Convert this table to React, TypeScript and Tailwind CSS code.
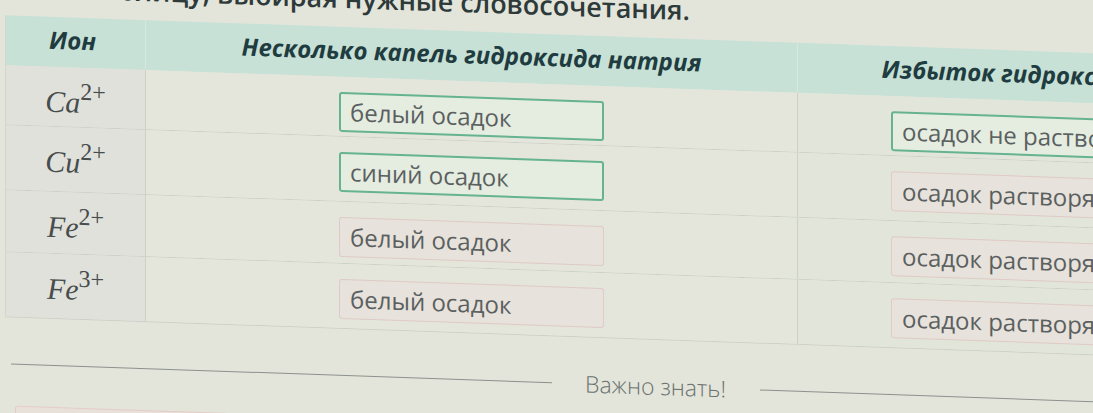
import React from 'react';

type Row = {
  el: string;
  charge: string;
  few: string;
  fewOk: boolean;
  excess: string;
  excessOk: boolean;
  h: string;
};

const rows: Row[] = [
  { el: 'Ca', charge: '2+', few: 'белый осадок', fewOk: true, excess: 'осадок не растворяется', excessOk: true, h: 'h-[60px]' },
  { el: 'Cu', charge: '2+', few: 'синий осадок', fewOk: true, excess: 'осадок растворяется', excessOk: false, h: 'h-[65px]' },
  { el: 'Fe', charge: '2+', few: 'белый осадок', fewOk: false, excess: 'осадок растворяется', excessOk: false, h: 'h-[62px]' },
  { el: 'Fe', charge: '3+', few: 'белый осадок', fewOk: false, excess: 'осадок растворяется', excessOk: false, h: 'h-[65px]' },
];

const Chip: React.FC<{ text: string; ok: boolean }> = ({ text, ok }) => (
  <div
    className={
      ok
        ? 'h-[40px] w-[265px] rounded-[3px] border-2 border-[#66b391] bg-[#e5ece0] pl-[9px] text-[24px] leading-[36px] whitespace-nowrap overflow-hidden text-[#5a605f]'
        : 'h-[40px] w-[265px] rounded-[3px] border border-[#dfcac5] bg-[#e7e2db] pl-[10px] text-[24px] leading-[38px] whitespace-nowrap overflow-hidden text-[#5a605f]'
    }
  >
    {text}
  </div>
);

export default function App() {
  return (
    <div className="w-[1093px] h-[413px] overflow-hidden bg-[#e3e5db] font-['Open_Sans',sans-serif]">
      <div className="flex flex-col w-[1093px] origin-top-left skew-y-2">
        {/* task title, mostly cut off by the top edge */}
        <div className="-mt-[29px] h-[30px] flex justify-end w-[690px]">
          <p className="shrink-0 text-[27px] font-semibold leading-[30px] text-[#2e3a3a] whitespace-nowrap">
            Заполни таблицу, выбирая нужные словосочетания.
          </p>
        </div>

        <div className="ml-[5px] mt-[14px] w-[1320px] border-l border-[#d3d6cd]">
          <div className="grid grid-cols-[140px_652px_524px] h-[50px] bg-[#c8e1d6] text-[#1f3c40] text-[24px] font-bold italic">
            <div className="flex items-center justify-center pb-[5px] pr-[6px] border-r border-[#d6e7df]">Ион</div>
            <div className="flex items-center justify-center pb-[4px] border-r border-[#d6e7df] whitespace-nowrap">
              Несколько капель гидроксида натрия
            </div>
            <div className="flex items-center justify-center pb-[4px] whitespace-nowrap">Избыток гидроксида натрия</div>
          </div>

          {rows.map((r, i) => (
            <div
              key={i}
              className={`grid grid-cols-[140px_652px_524px] ${r.h} border-b border-[#cdd0c7]`}
            >
              <div className="bg-[#e0e1db] border-r border-[#cdd0c7] pt-[21px] text-center text-[#474c4d] leading-[28px] whitespace-nowrap font-['Liberation_Serif',serif]">
                <span className="italic text-[30px]">{r.el}</span>
                <span className="relative -top-[13px] text-[24px]">{r.charge}</span>
              </div>
              <div className="bg-[#e4e6db] border-r border-[#cdd0c7] pt-[15px] flex justify-center">
                <Chip text={r.few} ok={r.fewOk} />
              </div>
              <div className="bg-[#e2e6da] pt-[15px] pl-[93px]">
                <Chip text={r.excess} ok={r.excessOk} />
              </div>
            </div>
          ))}
        </div>

        <div className="mt-[34px] h-[24px] flex items-center">
          <div className="ml-[11px] h-px w-[541px] bg-[#8d918c]" />
          <span className="ml-[33px] text-[23px] font-light leading-[24px] text-[#6a716e] whitespace-nowrap">
            Важно знать!
          </span>
          <div className="ml-[34px] h-px flex-1 bg-[#8d918c]" />
        </div>

        <div className="ml-[15px] mt-[30px] h-[40px] w-[1060px] rounded-[3px] border border-[#e6cbc6] bg-[#e8e1da]" />
      </div>
    </div>
  );
}
